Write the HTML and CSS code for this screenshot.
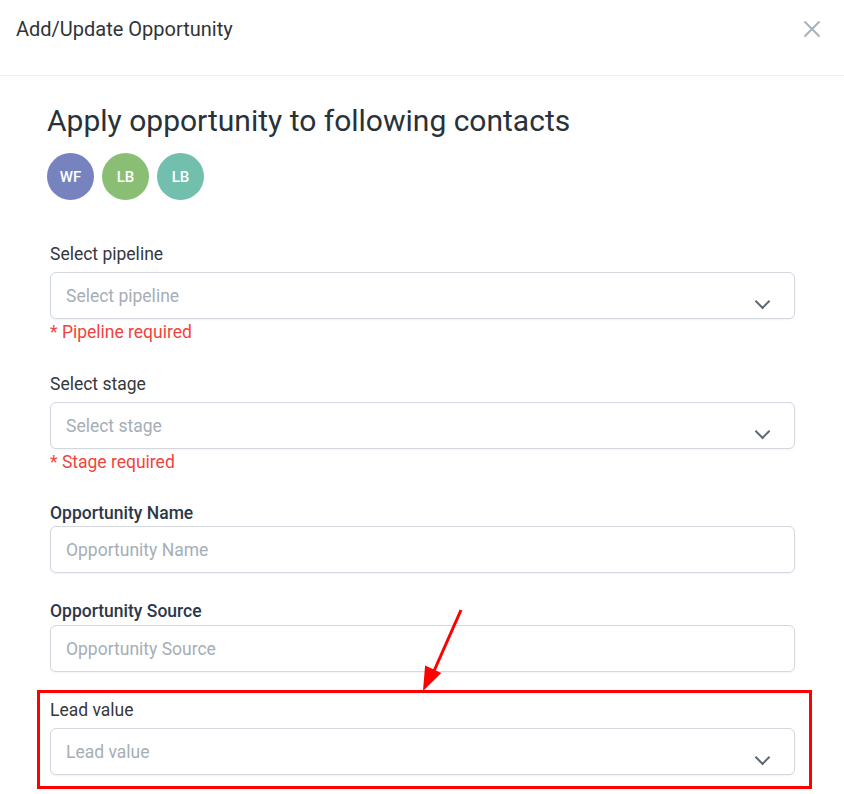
FILE: index.html
```html
<!DOCTYPE html>
<html lang="en">
<head>
  <meta charset="UTF-8">
  <title>Add/Update Opportunity</title>
  <link rel="stylesheet" href="styles.css">
</head>
<body>
  <div class="modal">
    <div class="modal-header">
      <h1 class="modal-title">Add/Update Opportunity</h1>
      <button class="close-btn" type="button" aria-label="Close">
        <svg width="18" height="18" viewBox="0 0 18 18"><path d="M1.5 1.5 L16.5 16.5 M16.5 1.5 L1.5 16.5" stroke="#a9b2ba" stroke-width="2" fill="none"/></svg>
      </button>
    </div>

    <div class="modal-body">
      <h2 class="apply-title">Apply opportunity to following contacts</h2>
      <div class="avatars">
        <span class="avatar avatar-purple">WF</span>
        <span class="avatar avatar-green">LB</span>
        <span class="avatar avatar-teal">LB</span>
      </div>

      <form class="opp-form" autocomplete="off">
        <!-- pipeline -->
        <div class="field field-pipeline">
          <label class="field-label" for="pipeline">Select pipeline</label>
          <div class="select-wrap">
            <input class="field-input" id="pipeline" type="text" placeholder="Select pipeline">
            <span class="chevron"></span>
          </div>
          <div class="field-error">* Pipeline required</div>
        </div>

        <!-- stage -->
        <div class="field field-stage">
          <label class="field-label" for="stage">Select stage</label>
          <div class="select-wrap">
            <input class="field-input" id="stage" type="text" placeholder="Select stage">
            <span class="chevron"></span>
          </div>
          <div class="field-error">* Stage required</div>
        </div>

        <div class="field field-name">
          <label class="field-label strong" for="oppName">Opportunity Name</label>
          <input class="field-input" id="oppName" type="text" placeholder="Opportunity Name">
        </div>

        <div class="field field-source">
          <label class="field-label strong" for="oppSource">Opportunity Source</label>
          <input class="field-input" id="oppSource" type="text" placeholder="Opportunity Source">
        </div>

        <!-- highlighted lead value -->
        <div class="highlight">
          <svg class="arrow" width="44" height="84" viewBox="0 0 44 84">
            <line x1="40" y1="1" x2="13" y2="62" stroke="#ff0000" stroke-width="3"/>
            <polygon points="2,82 4.1,56.5 20.3,64.1" fill="#ff0000"/>
          </svg>
          <div class="field field-lead">
            <label class="field-label" for="leadValue">Lead value</label>
            <div class="select-wrap">
              <input class="field-input" id="leadValue" type="text" placeholder="Lead value">
              <span class="chevron"></span>
            </div>
          </div>
        </div>
      </form>
    </div>
  </div>
</body>
</html>
```

FILE: styles.css
```css
body {
  margin: 0;
  background: #fff;
  font-family: Roboto, 'Liberation Sans', Arial, sans-serif;
  color: #2f3336;
}
.modal {
  width: 844px;
  min-height: 794px;
  background: #fff;
}
.modal-header {
  height: 76px;
  border-bottom: 1px solid #edf2f7;
  display: flex;
  align-items: flex-start;
  justify-content: space-between;
  padding: 0 22px 0 16px;
  box-sizing: border-box;
}
.modal-title {
  margin: 18px 0 0 0;
  font-size: 20px;
  font-weight: 400;
  line-height: 22px;
  color: #2f3438;
}
.close-btn {
  margin-top: 20px;
  background: none;
  border: none;
  padding: 0;
  width: 20px;
  height: 20px;
  cursor: pointer;
}
.modal-body {
  padding: 25px 0 0 47px;
}
.apply-title {
  margin: 0;
  font-size: 30px;
  font-weight: 400;
  line-height: 40px;
  color: #283238;
}
.avatars {
  display: flex;
  gap: 8px;
  margin-top: 12px;
}
.avatar {
  width: 47px;
  height: 47px;
  border-radius: 50%;
  display: flex;
  align-items: center;
  justify-content: center;
  color: #fff;
  font-size: 15px;
  font-weight: 500;
}
.avatar-purple { background: #7783bf; }
.avatar-green { background: #8abe75; }
.avatar-teal { background: #72bfad; }

.opp-form {
  display: flex;
  flex-direction: column;
  margin-left: 3px;
  width: 745px;
}
.field {
  display: flex;
  flex-direction: column;
}
.field-pipeline { margin-top: 44px; }
.field-stage { margin-top: 32px; }
.field-name { margin-top: 31px; }
.field-source { margin-top: 28px; }

.field-label {
  font-size: 17.5px;
  line-height: 20px;
  color: #33383d;
  margin-bottom: 8px;
}
.field-label.strong {
  font-weight: 500;
  color: #2d3748;
  margin-bottom: 3px;
}
.field-source .field-label.strong { margin-bottom: 4px; }

.field-input {
  width: 100%;
  height: 47px;
  box-sizing: border-box;
  border: 1px solid #d3d7de;
  border-radius: 6px;
  padding: 0 15px;
  font-family: inherit;
  font-size: 17.5px;
  color: #333;
  background: #fff;
  outline: none;
  box-shadow: 0 1px 2px rgba(16,24,40,0.05);
}
.field-input::placeholder {
  color: #a5aeb6;
}
.select-wrap {
  position: relative;
}
.chevron {
  position: absolute;
  right: 27px;
  top: 24px;
  width: 9px;
  height: 9px;
  border-right: 2px solid #5d6973;
  border-bottom: 2px solid #5d6973;
  transform: rotate(45deg);
  pointer-events: none;
}
.field-error {
  margin-top: 3px;
  font-size: 17.5px;
  line-height: 20px;
  color: #f0443e;
}

.highlight {
  position: relative;
  margin: 18px 0 0 -13px;
  width: 775px;
  box-sizing: border-box;
  border: 3px solid #ff0000;
  padding: 7px 14px 11px 10px;
}
.arrow {
  position: absolute;
  left: 381px;
  top: -84px;
}
.field-lead .field-label {
  margin-bottom: 8px;
}
```
